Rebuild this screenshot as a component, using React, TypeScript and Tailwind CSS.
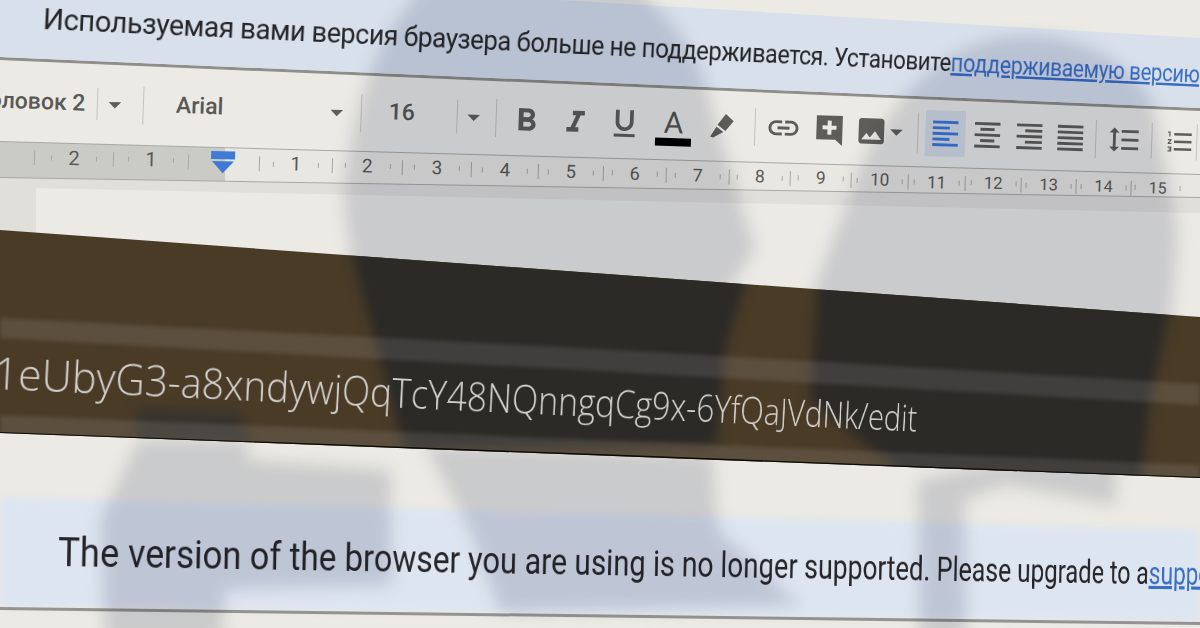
import React from "react";
import {
  MdFormatBold, MdFormatItalic, MdFormatUnderlined, MdLink, MdInsertPhoto,
  MdArrowDropDown, MdFormatAlignLeft, MdFormatAlignCenter, MdFormatAlignRight, MdFormatAlignJustify,
  MdFormatLineSpacing, MdFormatListNumbered,
} from "react-icons/md";

const Sep = ({ h = "h-[36px]" }: { h?: string }) => <div className={`w-px shrink-0 bg-[#c4c3c0] ${h}`} />;

const Cell = ({ w, children }: { w: string; children?: React.ReactNode }) => (
  <div className={`${w} shrink-0 flex items-center justify-center`}>{children}</div>
);

const Caret = () => <MdArrowDropDown className="shrink-0 text-[#5f5d5a]" size={30} />;

const ticks: [number, string][] = [
  [79, "2"], [75, "1"], [71, ""], [73, "1"], [70, "2"], [69, "3"], [67, "4"], [65, "5"], [63, "6"],
  [63, "7"], [61, "8"], [61, "9"], [57, "10"], [57, "11"], [56, "12"], [55, "13"], [55, "14"], [53, "15"],
];

function Ruler() {
  return (
    <div className="flex h-[24px] w-[1300px] ml-[34px] origin-left rotate-[1.6deg] items-center text-[#5a5956]">
      {ticks.map(([w, n], i) => (
        <div key={i} className="flex h-full shrink-0 items-center" style={{ width: w }}>
          <div className="h-[15px] w-px shrink-0 bg-[#a9a8a4]" />
          <div className="flex flex-1 items-center justify-center gap-[10px]">
            {n ? (
              <>
                <div className="h-[5px] w-px bg-[#a9a8a4]" />
                <span className="w-[24px] text-center leading-none" style={{ fontSize: 20 - i * 0.24 }}>{n}</span>
                <div className="h-[5px] w-px bg-[#a9a8a4]" />
              </>
            ) : (
              <svg width="26" height="24" viewBox="0 0 26 24" className="-translate-x-[1px]">
                <rect x="1" y="1" width="24" height="8" fill="#3f7ad6" />
                <path d="M2 11 H24 L13 23 Z" fill="#3f7ad6" />
              </svg>
            )}
          </div>
        </div>
      ))}
    </div>
  );
}

function Toolbar() {
  return (
    <div className="flex h-[60px] w-[1300px] -ml-[47px] origin-left rotate-[2deg] items-center text-[#5f5d5a]">
      <div className="w-[132px] shrink-0 -translate-y-[1px] whitespace-nowrap text-right text-[23px] font-medium leading-none text-[#5a5854]">Заголовок 2</div>
      <div className="w-[12px] shrink-0" />
      <Sep h="h-[32px]" />
      <Cell w="w-[34px]"><Caret /></Cell>
      <div className="w-[11px] shrink-0" />
      <Sep h="h-[38px]" />
      <div className="w-[176px] shrink-0 -translate-y-[2px] pl-[32px] text-[23px] font-medium leading-none text-[#5a5854]">Arial</div>
      <Cell w="w-[34px]"><Caret /></Cell>
      <div className="w-[7px] shrink-0" />
      <Sep h="h-[38px]" />
      <div className="w-[80px] shrink-0 -translate-y-[3px] text-center text-[23px] font-medium leading-none text-[#5a5854]">16</div>
      <div className="w-[15px] shrink-0" />
      <Sep h="h-[34px]" />
      <Cell w="w-[32px]"><Caret /></Cell>
      <div className="w-[6px] shrink-0" />
      <Sep h="h-[38px]" />
      <Cell w="w-[60px]"><MdFormatBold size={38} className="translate-y-[2px]" /></Cell>
      <Cell w="w-[38px]"><MdFormatItalic size={36} className="translate-y-[2px]" /></Cell>
      <Cell w="w-[60px]"><MdFormatUnderlined size={36} className="translate-y-[1px]" /></Cell>
      <div className="flex w-[38px] shrink-0 translate-y-[3px] flex-col items-center">
        <span className="text-[30px] leading-[30px] text-[#55534f]">A</span>
        <div className="h-[8px] w-[36px] bg-black" />
      </div>
      <Cell w="w-[58px]">
        <svg width="28" height="28" viewBox="0 0 28 28" fill="#5f5d5a">
          <path d="M18 2 L26 9 L18 19 L10 13 Z" />
          <path d="M9 15 L16 20 L11 23 L6 26 L3 25 Z" />
        </svg>
      </Cell>
      <div className="w-[4px] shrink-0" />
      <Sep h="h-[38px]" />
      <Cell w="w-[56px]"><MdLink size={36} /></Cell>
      <Cell w="w-[36px]">
        <svg width="28" height="32" viewBox="0 0 28 32" className="translate-y-[1px]">
          <path d="M1 1 H27 V31 L20 25 H1 Z" fill="#5f5d5a" />
          <path d="M12 6 H16 V11 H21 V15 H16 V20 H12 V15 H7 V11 H12 Z" fill="#ebeae5" />
        </svg>
      </Cell>
      <div className="w-[4px] shrink-0" />
      <Cell w="w-[40px]"><MdInsertPhoto size={34} /></Cell>
      <Cell w="w-[10px]"><Caret /></Cell>
      <div className="w-[16px] shrink-0" />
      <Sep h="h-[40px]" />
      <div className="w-[7px] shrink-0" />
      <div className="flex h-[46px] w-[40px] shrink-0 items-center justify-center bg-[#d3dae3]">
        <MdFormatAlignLeft size={34} className="text-[#3a78d6]" />
      </div>
      <Cell w="w-[44px]"><MdFormatAlignCenter size={34} /></Cell>
      <Cell w="w-[40px]"><MdFormatAlignRight size={34} /></Cell>
      <Cell w="w-[42px]"><MdFormatAlignJustify size={34} /></Cell>
      <div className="w-[4px] shrink-0" />
      <Sep h="h-[38px]" />
      <Cell w="w-[55px]"><MdFormatLineSpacing size={34} /></Cell>
      <Sep h="h-[36px]" />
      <div className="flex w-[44px] shrink-0 justify-end pr-[1px]"><MdFormatListNumbered size={30} /></div>
      <Sep h="h-[36px]" />
    </div>
  );
}

export default function App() {
  return (
    <div className="h-[628px] w-[1200px] overflow-hidden bg-[#ebeae4]">
      <div className="relative h-[628px] w-[1200px] overflow-hidden bg-[#ebeae4] blur-[0.5px] font-['Roboto',sans-serif]">
        {/* document area */}
        <div className="absolute inset-0 bg-[#e0dfda] [clip-path:polygon(0_177px,1200px_197px,1200px_330px,0_240px)]" />
        <div className="absolute inset-0 bg-[#ebeae5] [clip-path:polygon(36px_188px,1200px_213px,1200px_330px,36px_240px)]" />

        {/* ruler */}
        <div className="absolute inset-0 bg-[#a9a9a4] [clip-path:polygon(0_141px,1200px_174px,1200px_198px,0_178px)]" />
        <div className="absolute inset-0 bg-[linear-gradient(90deg,#cbcbc6_225px,#e8e7e1_225px)] [clip-path:polygon(0_142px,1200px_175px,1200px_197px,0_177px)]" />
        <div className="absolute inset-0 pt-[145px]"><Ruler /></div>

        {/* toolbar */}
        <div className="absolute inset-0 pt-[69px]"><Toolbar /></div>

        {/* top banner */}
        <div className="absolute inset-0 bg-[#8f8e8b] blur-[0.6px] [clip-path:polygon(0_57px,1200px_108px,1200px_111px,0_60px)]" />
        <div className="absolute inset-0 bg-[#d7e0eb] [clip-path:polygon(0_0,560px_0,1200px_38px,1200px_108px,0_57px)]" />
        <div className="absolute inset-0 pl-[43px] pt-[1px]">
          <div className="flex w-[1600px] origin-left whitespace-nowrap text-[30px] leading-[36px] text-[#26262a] [transform:rotate(2.75deg)_perspective(1000px)_rotateY(8.8deg)]">
            <span className="tracking-[-0.5px]">Используемая вами версия браузера больше не поддерживается. Установите</span>
            <span className="tracking-[-0.5px] text-[#3a6fc6] underline">поддерживаемую версию</span>
          </div>
        </div>

        {/* bottom banner */}
        <div className="absolute inset-0 blur-[3px]">
          <div className="absolute inset-0 bg-[#dde5f0] [clip-path:polygon(0_497px,1200px_530px,1200px_622px,0_607px)]" />
        </div>
        <div className="absolute inset-0 bg-[#94938f] blur-[0.7px] [clip-path:polygon(0_607px,1200px_622px,1200px_625px,0_610px)]" />
        <div className="absolute inset-0 pl-[58px] pt-[531px]">
          <div className="flex w-[1800px] origin-left whitespace-nowrap text-[40px] leading-[44px] text-[#26262a] [transform:rotate(1.1deg)_perspective(1000px)_rotateY(11deg)_scaleX(0.94)]">
            <span>The version of the browser you are using is no longer supported. Please upgrade to a</span>
            <span className="text-[#3a6fc6] underline">supported browser</span>
          </div>
        </div>

        {/* soft shadows over paper */}
        <svg className="pointer-events-none absolute inset-0 mix-blend-multiply" width="1200" height="628" viewBox="0 0 1200 628">
          <defs>
            <filter id="soft" x="-20%" y="-20%" width="140%" height="140%" colorInterpolationFilters="sRGB"><feGaussianBlur stdDeviation="8" /></filter>
          </defs>
          <g fill="#dcdde4" filter="url(#soft)">
            <path d="M430 -20 L630 -20 C670 20 700 50 712 110 L755 250 L700 330 L360 330 L344 200 C350 120 370 40 430 -20 Z" />
            <path d="M1000 38 C1060 28 1120 50 1152 100 L1178 230 L1170 330 L810 300 L860 170 C880 120 930 50 1000 38 Z" />
            <path d="M138 440 L245 440 L250 460 L390 470 L392 585 L225 590 L222 640 L105 640 L100 520 Z" />
            <path d="M425 445 L712 455 L718 530 L800 605 L500 612 L470 530 Z" />
            <path d="M918 480 L964 470 L1118 445 L1115 505 L1005 485 L964 500 L966 640 L920 640 Z" />
          </g>
        </svg>

        {/* dark band */}
        <div className="absolute inset-0 overflow-hidden bg-[#4a3b27] [clip-path:polygon(0_230px,1200px_317px,1200px_478px,0_433px)]">
          <svg className="absolute inset-0" width="1200" height="628" viewBox="0 0 1200 628">
            <defs>
              <filter id="band" x="-20%" y="-20%" width="140%" height="140%" colorInterpolationFilters="sRGB"><feGaussianBlur stdDeviation="6" /></filter>
              <filter id="band2" x="-5%" y="-50%" width="110%" height="200%" colorInterpolationFilters="sRGB"><feGaussianBlur stdDeviation="2" /></filter>
            </defs>
            <g fill="#2b2a27" filter="url(#band)">
              <path d="M345 230 L752 260 L725 350 L717 445 L405 450 L375 340 Z" />
              <path d="M818 280 L1172 300 L1150 400 L1140 490 L905 475 L810 400 Z" />
              <path d="M138 408 L240 412 L250 445 L135 445 Z" fill="#37342e" />
            </g>
            <g fill="#ffffff" opacity="0.1" filter="url(#band2)">
              <path d="M0 318 L600 349 L1200 384 L1200 405 L600 371 L0 338 Z" />
              <path d="M0 415 L600 440 L1200 465 L1200 480 L0 436 Z" />
            </g>
            <path d="M0 432 L600 454 L1200 477 L1200 480 L600 457 L0 435 Z" fill="#0d0b08" />
          </svg>
        </div>
        <div className="absolute inset-0 -ml-[6px] pt-[345px]">
          <div className="w-[1500px] origin-left whitespace-nowrap font-['Open_Sans',sans-serif] text-[44px] font-light leading-[54px] text-[#d2d0cc] [transform:rotate(2.85deg)_perspective(1000px)_rotateY(11.5deg)]">
            1eUbyG3-a8xndywjQqTcY48NQnngqCg9x-6YfQaJVdNk/edit
          </div>
        </div>
      </div>
    </div>
  );
}
